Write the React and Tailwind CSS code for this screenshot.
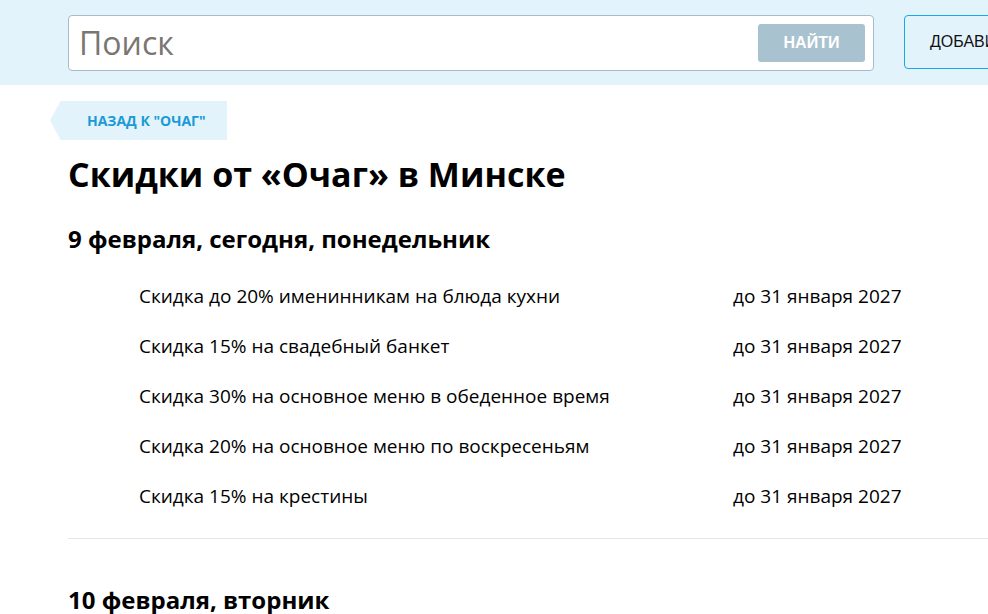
import React from "react";

const deals = [
  "Скидка до 20% именинникам на блюда кухни",
  "Скидка 15% на свадебный банкет",
  "Скидка 30% на основное меню в обеденное время",
  "Скидка 20% на основное меню по воскресеньям",
  "Скидка 15% на крестины",
];

const App = () => {
  return (
    <div className="min-h-screen w-[988px] overflow-hidden bg-white font-['Open_Sans',sans-serif] text-black">
      <header className="flex h-[85px] items-start bg-[#e3f3fb] pl-[68px] pt-[15px]">
        <div className="flex h-[56px] w-[806px] flex-none items-center justify-between rounded-[4px] border border-[#a7bcc7] bg-white pl-[10px] pr-[8px]">
          <span className="text-[32px] leading-none text-[#7a7672]">Поиск</span>
          <button className="flex h-[38px] w-[107px] items-center justify-center rounded-[3px] bg-[#a9c2cf] font-['Liberation_Sans',sans-serif] text-[16px] font-bold text-white">
            НАЙТИ
          </button>
        </div>
        <button className="ml-[30px] flex h-[54px] w-[200px] flex-none items-center rounded-[4px] border border-[#1aa7e8] bg-[#e3f3fb] pl-[25px] font-['Liberation_Sans',sans-serif] text-[16px] text-[#111]">
          ДОБАВИТЬ
        </button>
      </header>

      <main className="pl-[68px] pr-0">
        <div className="mt-[16px] flex h-[39px] w-[177px] -ml-[18px] items-center bg-[#e3f3fb] [clip-path:polygon(0_50%,6%_0,100%_0,100%_100%,6%_100%)]">
          <span className="pl-[37px] text-[14px] font-bold text-[#1a9ad6]">НАЗАД К "ОЧАГ"</span>
        </div>

        <h1 className="mt-[12px] text-[34px] font-bold leading-[44px]">Скидки от «Очаг» в Минске</h1>

        <h2 className="mt-[28px] text-[24px] font-bold leading-[30px]">9 февраля, сегодня, понедельник</h2>

        <ul className="mt-[30px]">
          {deals.map((d) => (
            <li key={d} className="flex h-[50px] items-start pl-[71px] text-[19px] leading-[24px]">
              <span className="w-[594px] flex-none">{d}</span>
              <span>до 31 января 2027</span>
            </li>
          ))}
        </ul>

        <div className="mt-[4px] h-px bg-[#e6e6e6]" />

        <h2 className="mt-[46px] text-[24px] font-bold leading-[30px]">10 февраля, вторник</h2>
      </main>
    </div>
  );
};

export default App;
